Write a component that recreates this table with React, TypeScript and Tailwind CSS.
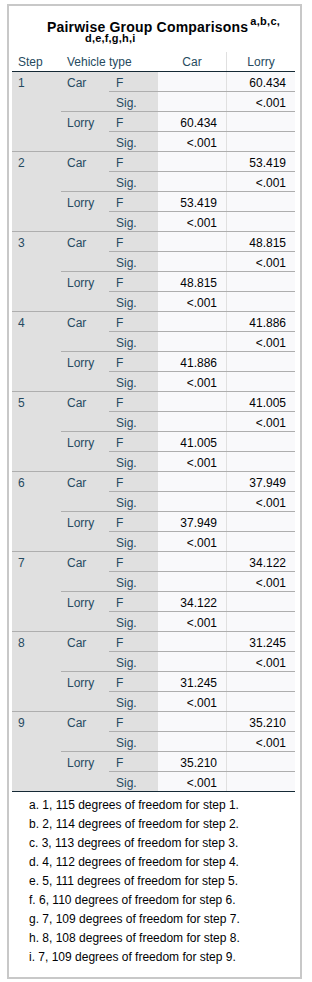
import React from "react";

const steps = [
  { step: "1", value: "60.434" },
  { step: "2", value: "53.419" },
  { step: "3", value: "48.815" },
  { step: "4", value: "41.886" },
  { step: "5", value: "41.005" },
  { step: "6", value: "37.949" },
  { step: "7", value: "34.122" },
  { step: "8", value: "31.245" },
  { step: "9", value: "35.210" },
];

const footnotes = [
  "a. 1, 115 degrees of freedom for step 1.",
  "b. 2, 114 degrees of freedom for step 2.",
  "c. 3, 113 degrees of freedom for step 3.",
  "d. 4, 112 degrees of freedom for step 4.",
  "e. 5, 111 degrees of freedom for step 5.",
  "f. 6, 110 degrees of freedom for step 6.",
  "g. 7, 109 degrees of freedom for step 7.",
  "h. 8, 108 degrees of freedom for step 8.",
  "i. 7, 109 degrees of freedom for step 9.",
];

function StatRow({
  label,
  car,
  lorry,
  divider,
}: {
  label: string;
  car: string;
  lorry: string;
  divider: boolean;
}) {
  return (
    <div
      className={
        divider
          ? "flex h-[20px] border-b border-[#aeaeae]"
          : "flex h-[19px]"
      }
    >
      <div className="w-[49px] bg-[#e0e0e0] pl-[7px] pt-[5px] leading-[12px] text-[#264a60]">
        {label}
      </div>
      <div className="w-[69px] border-r border-[#e0e0e0] bg-[#f9f9fb] pr-[9px] pt-[5px] text-right leading-[12px] text-[#010205]">
        {car}
      </div>
      <div className="w-[68px] bg-[#f9f9fb] pr-[9px] pt-[5px] text-right leading-[12px] text-[#010205]">
        {lorry}
      </div>
    </div>
  );
}

function VehicleGroup({
  name,
  car,
  lorry,
  sigCar,
  sigLorry,
  divider,
}: {
  name: string;
  car: string;
  lorry: string;
  sigCar: string;
  sigLorry: string;
  divider: boolean;
}) {
  return (
    <div className={divider ? "flex border-b border-[#aeaeae]" : "flex"}>
      <div className="w-[48px] bg-[#e0e0e0] pl-[6px] pt-[5px] leading-[12px] text-[#264a60]">
        {name}
      </div>
      <div className="flex flex-col">
        <StatRow label="F" car={car} lorry={lorry} divider />
        <StatRow label="Sig." car={sigCar} lorry={sigLorry} divider={false} />
      </div>
    </div>
  );
}

export default function App() {
  return (
    <div
      className="min-h-[982px] bg-white pt-[4px] text-[12px]"
      style={{ fontFamily: '"Liberation Sans", Arial, sans-serif' }}
    >
      <div className="ml-[7px] w-[295px] border-2 border-[#c8c8c8] bg-white pb-[10px] pl-[3px] pr-[5px]">
        {/* Title */}
        <div className="mt-[9px] flex h-[16px] items-start pl-[35px] text-[#010205]">
          <span className="mt-[6px] text-[14px] font-bold leading-[12px] tracking-[0.2px]">
            Pairwise Group Comparisons
          </span>
          <span className="ml-[2px] text-[11px] font-bold leading-[12px] tracking-[0.3px]">
            a,b,c,
          </span>
        </div>
        <div className="h-[12px] pl-[73px] pt-[2px] text-[11px] font-bold leading-[10px] tracking-[0.2px] text-[#010205]">
          d,e,f,g,h,i
        </div>

        {/* Column headers */}
        <div className="mt-[9px] flex h-[20px] border-b border-[#152935] text-[#264a60]">
          <div className="w-[49px] pl-[6px] pt-[4px] leading-[12px]">Step</div>
          <div className="w-[97px] pl-[6px] pt-[4px] leading-[12px]">Vehicle type</div>
          <div className="w-[69px] border-r border-[#e0e0e0] pt-[4px] text-center leading-[12px]">
            Car
          </div>
          <div className="w-[68px] pt-[4px] text-center leading-[12px]">Lorry</div>
        </div>

        {/* Body */}
        {steps.map((s, i) => (
          <div
            key={s.step}
            className={
              i === steps.length - 1
                ? "flex border-b border-[#152935]"
                : "flex border-b border-[#aeaeae]"
            }
          >
            <div className="w-[49px] bg-[#e0e0e0] pl-[6px] pt-[5px] leading-[12px] text-[#264a60]">
              {s.step}
            </div>
            <div className="flex flex-col">
              <VehicleGroup
                name="Car"
                car=""
                lorry={s.value}
                sigCar=""
                sigLorry="<.001"
                divider
              />
              <VehicleGroup
                name="Lorry"
                car={s.value}
                lorry=""
                sigCar="<.001"
                sigLorry=""
                divider={false}
              />
            </div>
          </div>
        ))}

        {/* Footnotes */}
        <div className="pt-[4px] pl-[17px] text-[#010205]">
          {footnotes.map((f) => (
            <div key={f} className="h-[19px] leading-[19px]">
              {f}
            </div>
          ))}
        </div>
      </div>
    </div>
  );
}
